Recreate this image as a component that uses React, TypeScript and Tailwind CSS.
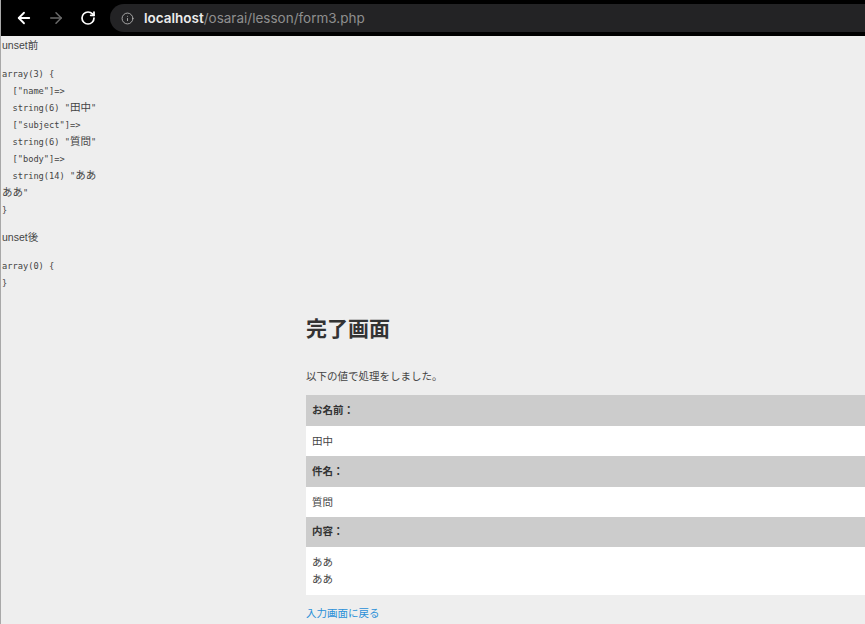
import { ArrowLeft, ArrowRight, RotateCw, Info } from "lucide-react";

const rows = [
  { label: "お名前：", value: ["田中"], head: "h-[31px]", h: "h-[30px]" },
  { label: "件名：", value: ["質問"], head: "h-[31px]", h: "h-[30px]" },
  { label: "内容：", value: ["ああ", "ああ"], head: "h-[30px]", h: "h-[48px]" },
];

const sans = "font-['Liberation_Sans','Noto_Sans_CJK_JP',sans-serif]";
const mono = "font-['DejaVu_Sans_Mono','Noto_Sans_CJK_JP',monospace]";

function Jp({ children }: { children: string }) {
  return <span className="text-[10.5px] leading-[0]">{children}</span>;
}

function BrowserBar() {
  return (
    <header className="flex h-9 items-center bg-black pl-[14px]">
      <ArrowLeft size={18} strokeWidth={2.4} className="text-white" />
      <ArrowRight size={18} strokeWidth={2} className="ml-[14px] text-[#6a6a6a]" />
      <RotateCw size={16} strokeWidth={2.6} className="ml-[15px] text-white" />
      <div className="ml-[14px] flex h-7 flex-1 items-center rounded-l-full bg-[#232325] pl-[11px]">
        <Info size={13} strokeWidth={1.6} className="text-[#b8b8b8]" />
        <span className="ml-[10px] font-['Inter',sans-serif] text-[13.5px] text-[#8f8f8f]">
          <span className="font-semibold text-[#ececec]">localhost</span>/osarai/lesson/form3.php
        </span>
      </div>
    </header>
  );
}

function DumpBefore() {
  return (
    <div className={`pl-[1px] text-[10.5px] leading-[17px] text-[#444] ${sans}`}>
      <p className="h-[17px]">unset前</p>
      <pre className={`mt-3 text-[8.7px] leading-[17px] ${mono}`}>
        <div>array(3) {"{"}</div>
        <div>{`  ["name"]=>`}</div>
        <div className="h-[17px]">{`  string(6) "`}<Jp>田中</Jp>"</div>
        <div>{`  ["subject"]=>`}</div>
        <div className="h-[17px]">{`  string(6) "`}<Jp>質問</Jp>"</div>
        <div>{`  ["body"]=>`}</div>
        <div className="h-[17px]">{`  string(14) "`}<Jp>ああ</Jp></div>
        <div className="h-[17px]"><Jp>ああ</Jp>"</div>
        <div>{"}"}</div>
      </pre>
      <p className="mt-[10px] h-[17px]">unset後</p>
      <pre className={`mt-3 text-[8.7px] leading-[17px] ${mono}`}>{`array(0) {
}`}</pre>
    </div>
  );
}

export default function App() {
  return (
    <div className="h-[624px] w-[865px] overflow-hidden border-l border-[#a8a8a8] bg-[#eeeeee]">
      <BrowserBar />
      <div className="h-[1px]" />
      <DumpBefore />
      <main className={`ml-[305px] mt-[22px] text-[10.5px] text-[#444] ${sans}`}>
        <h1 className="text-[21px] font-bold leading-[30px] text-[#333]">完了画面</h1>
        <p className="mt-[24px] leading-[16px]">以下の値で処理をしました。</p>
        <dl className="mt-[11px]">
          {rows.map((row) => (
            <div key={row.label}>
              <dt className={`flex items-center bg-[#cccccc] pl-[6px] font-bold text-[#333] ${row.head}`}>{row.label}</dt>
              <dd className={`flex flex-col justify-center bg-white pl-[6px] leading-[17px] ${row.h}`}>
                {row.value.map((line, i) => (
                  <span key={i}>{line}</span>
                ))}
              </dd>
            </div>
          ))}
        </dl>
        <a className="mt-[10px] block leading-[16px] text-[#2a90d8]">入力画面に戻る</a>
      </main>
    </div>
  );
}
